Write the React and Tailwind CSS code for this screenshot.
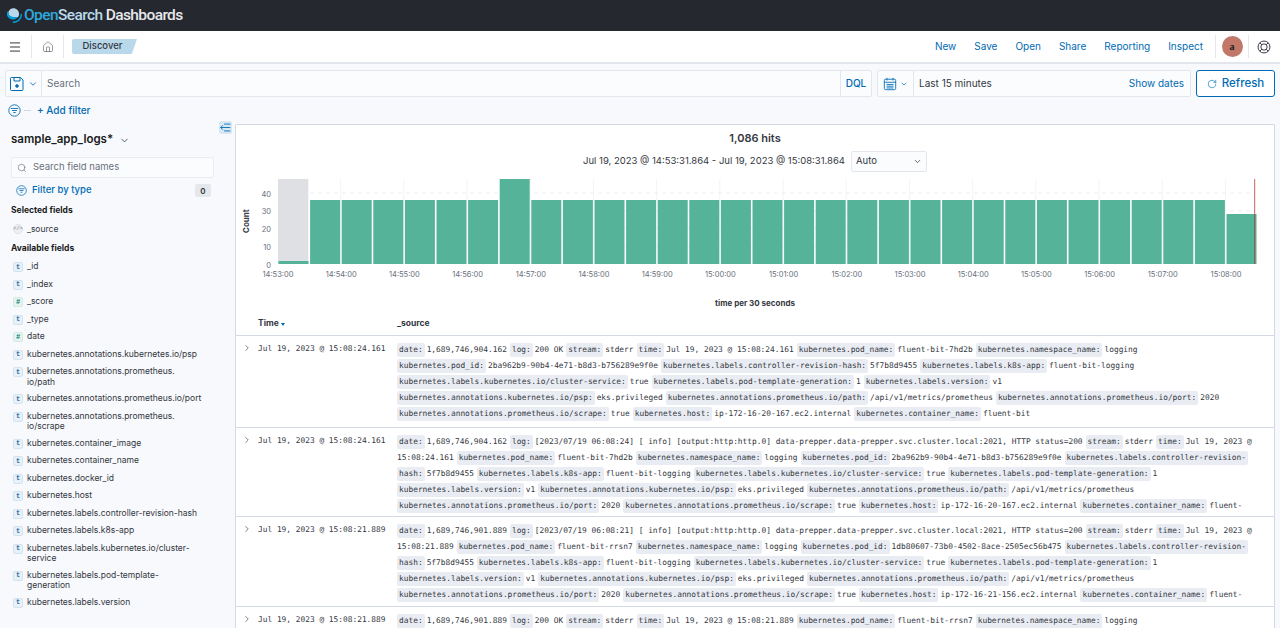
import { Menu, ChevronDown, ChevronRight, Search, RotateCw, Home } from 'lucide-react';

const SANS = 'font-["Inter",sans-serif]';

const bars = [2, 36, 36, 36, 36, 36, 36, 48, 36, 36, 36, 36, 36, 36, 36, 36, 36, 36, 36, 36, 36, 36, 36, 36, 36, 36, 36, 36, 36, 36, 28];
const ticks = ['14:53:00', '14:54:00', '14:55:00', '14:56:00', '14:57:00', '14:58:00', '14:59:00', '15:00:00', '15:01:00', '15:02:00', '15:03:00', '15:04:00', '15:05:00', '15:06:00', '15:07:00', '15:08:00'];

const fields = [
  ['t', '_id'],
  ['t', '_index'],
  ['#', '_score'],
  ['t', '_type'],
  ['#', 'date'],
  ['t', 'kubernetes.annotations.kubernetes.io/psp'],
  ['t', 'kubernetes.annotations.prometheus.\nio/path'],
  ['t', 'kubernetes.annotations.prometheus.io/port'],
  ['t', 'kubernetes.annotations.prometheus.\nio/scrape'],
  ['t', 'kubernetes.container_image'],
  ['t', 'kubernetes.container_name'],
  ['t', 'kubernetes.docker_id'],
  ['t', 'kubernetes.host'],
  ['t', 'kubernetes.labels.controller-revision-hash'],
  ['t', 'kubernetes.labels.k8s-app'],
  ['t', 'kubernetes.labels.kubernetes.io/cluster-\nservice'],
  ['t', 'kubernetes.labels.pod-template-\ngeneration'],
  ['t', 'kubernetes.labels.version'],
];

const rows = [
  {
    time: 'Jul 19, 2023 @ 15:08:24.161',
    height: 'h-[92px]',
    lines: [
      [['date:', '1,689,746,904.162'], ['log:', '200 OK'], ['stream:', 'stderr'], ['time:', 'Jul 19, 2023 @ 15:08:24.161'], ['kubernetes.pod_name:', 'fluent-bit-7hd2b'], ['kubernetes.namespace_name:', 'logging']],
      [['kubernetes.pod_id:', '2ba962b9-90b4-4e71-b8d3-b756289e9f0e'], ['kubernetes.labels.controller-revision-hash:', '5f7b8d9455'], ['kubernetes.labels.k8s-app:', 'fluent-bit-logging']],
      [['kubernetes.labels.kubernetes.io/cluster-service:', 'true'], ['kubernetes.labels.pod-template-generation:', '1'], ['kubernetes.labels.version:', 'v1']],
      [['kubernetes.annotations.kubernetes.io/psp:', 'eks.privileged'], ['kubernetes.annotations.prometheus.io/path:', '/api/v1/metrics/prometheus'], ['kubernetes.annotations.prometheus.io/port:', '2020']],
      [['kubernetes.annotations.prometheus.io/scrape:', 'true'], ['kubernetes.host:', 'ip-172-16-20-167.ec2.internal'], ['kubernetes.container_name:', 'fluent-bit']],
    ],
  },
  {
    time: 'Jul 19, 2023 @ 15:08:24.161',
    height: 'h-[89px]',
    lines: [
      [['date:', '1,689,746,904.162'], ['log:', '[2023/07/19 06:08:24] [ info] [output:http:http.0] data-prepper.data-prepper.svc.cluster.local:2021, HTTP status=200'], ['stream:', 'stderr'], ['time:', 'Jul 19, 2023 @']],
      [['', '15:08:24.161'], ['kubernetes.pod_name:', 'fluent-bit-7hd2b'], ['kubernetes.namespace_name:', 'logging'], ['kubernetes.pod_id:', '2ba962b9-90b4-4e71-b8d3-b756289e9f0e'], ['kubernetes.labels.controller-revision-', '']],
      [['hash:', '5f7b8d9455'], ['kubernetes.labels.k8s-app:', 'fluent-bit-logging'], ['kubernetes.labels.kubernetes.io/cluster-service:', 'true'], ['kubernetes.labels.pod-template-generation:', '1']],
      [['kubernetes.labels.version:', 'v1'], ['kubernetes.annotations.kubernetes.io/psp:', 'eks.privileged'], ['kubernetes.annotations.prometheus.io/path:', '/api/v1/metrics/prometheus']],
      [['kubernetes.annotations.prometheus.io/port:', '2020'], ['kubernetes.annotations.prometheus.io/scrape:', 'true'], ['kubernetes.host:', 'ip-172-16-20-167.ec2.internal'], ['kubernetes.container_name:', 'fluent-']],
    ],
  },
  {
    time: 'Jul 19, 2023 @ 15:08:21.889',
    height: 'h-[90px]',
    lines: [
      [['date:', '1,689,746,901.889'], ['log:', '[2023/07/19 06:08:21] [ info] [output:http:http.0] data-prepper.data-prepper.svc.cluster.local:2021, HTTP status=200'], ['stream:', 'stderr'], ['time:', 'Jul 19, 2023 @']],
      [['', '15:08:21.889'], ['kubernetes.pod_name:', 'fluent-bit-rrsn7'], ['kubernetes.namespace_name:', 'logging'], ['kubernetes.pod_id:', '1db80607-73b0-4502-8ace-2505ec56b475'], ['kubernetes.labels.controller-revision-', '']],
      [['hash:', '5f7b8d9455'], ['kubernetes.labels.k8s-app:', 'fluent-bit-logging'], ['kubernetes.labels.kubernetes.io/cluster-service:', 'true'], ['kubernetes.labels.pod-template-generation:', '1']],
      [['kubernetes.labels.version:', 'v1'], ['kubernetes.annotations.kubernetes.io/psp:', 'eks.privileged'], ['kubernetes.annotations.prometheus.io/path:', '/api/v1/metrics/prometheus']],
      [['kubernetes.annotations.prometheus.io/port:', '2020'], ['kubernetes.annotations.prometheus.io/scrape:', 'true'], ['kubernetes.host:', 'ip-172-16-21-156.ec2.internal'], ['kubernetes.container_name:', 'fluent-']],
    ],
  },
  {
    time: 'Jul 19, 2023 @ 15:08:21.889',
    height: 'h-[30px]',
    lines: [
      [['date:', '1,689,746,901.889'], ['log:', '200 OK'], ['stream:', 'stderr'], ['time:', 'Jul 19, 2023 @ 15:08:21.889'], ['kubernetes.pod_name:', 'fluent-bit-rrsn7'], ['kubernetes.namespace_name:', 'logging']],
    ],
  },
];

const Logo = () => (
  <svg width="15" height="15" viewBox="0 0 64 64" className="mr-[2px]">
    <path d="M61 24c-1.7 0-3 1.3-3 3 0 17.700-14.300 31-31 31-1.700 0-3 1.300-3 3s1.300 3 3 3c20 0 37-16 37-37 0-1.700-1.300-3-3-3z" fill="#00a3e0" />
    <path d="M48 38c2-3.500 4-8 3.500-14.500C50.500 10 38.500 0 26 1 13.800 2 5 12.500 6 22.500c.5 7 5 14 14 16 9 2 20.500 3 28-.5z" fill="#b9d9eb" />
    <path d="M3 14c-2 3.500-4 8.500-3 15 1.500 9.500 10 19 23 20 10 .7 19-4 24-11-6 3-16 2-24-.5C10 34 5 25 3 14z" fill="#00a3e0" />
  </svg>
);

const SaveIcon = () => (
  <svg width="16" height="16" viewBox="0 0 16 16" fill="none" stroke="#006bb4" strokeWidth="1">
    <path d="M2.500 1.500h9l2.500 2.500v9.500a1 1 0 0 1-1 1h-10.500a1 1 0 0 1-1-1v-11a1 1 0 0 1 1-1z" />
    <path d="M5 1.500v3.500h6v-3.500" />
    <circle cx="8" cy="10" r="1.300" fill="#006bb4" />
  </svg>
);

const FilterCircle = ({ size = 13 }) => (
  <svg width={size} height={size} viewBox="0 0 16 16" fill="none" stroke="#006bb4" strokeWidth="1.100">
    <circle cx="8" cy="8" r="7" />
    <path d="M3.500 5.500h9M5 8h6M6.500 10.500h3" />
  </svg>
);

const CalendarIcon = () => (
  <svg width="14" height="14" viewBox="0 0 16 16" fill="none" stroke="#006bb4" strokeWidth="1">
    <rect x="1.500" y="2.500" width="13" height="12" rx="1.500" />
    <path d="M1.500 6h13M4.500 1v3M11.500 1v3M4 8.500h8M4 10.500h8M4 12.500h8" />
  </svg>
);

const CollapseIcon = () => (
  <svg width="11" height="11" viewBox="0 0 16 16" fill="none" stroke="#006bb4" strokeWidth="1.300">
    <path d="M6 3h9M1 8h14M6 13h9M4 5 1 8l3 3" />
  </svg>
);

const GlobeIcon = () => (
  <svg width="14" height="14" viewBox="0 0 16 16" fill="none" stroke="#343741" strokeWidth="1.100">
    <circle cx="8" cy="8" r="6.800" />
    <circle cx="8" cy="8" r="3.600" />
    <path d="M3.200 3.200 5.500 5.500M12.800 3.200 10.500 5.500M3.200 12.800 5.500 10.500M12.800 12.800 10.500 10.500" />
  </svg>
);

const TypeToken = ({ type }) => (
  <span
    className={`flex h-[10px] w-[10px] shrink-0 items-center justify-center rounded-[2px] border font-["Liberation_Mono",monospace] text-[7px] font-bold leading-none ${
      type === '#' ? 'border-[#d3ebe3] bg-[#e6f4ef] text-[#017d73]' : 'border-[#d3e3f1] bg-[#e6f1fa] text-[#3a6f9f]'
    }`}
  >
    {type}
  </span>
);

const Chart = () => {
  const left = 277;
  const pitch = 31.6;
  const y0 = 274;
  const scale = 1.77;
  const gridY = [203, 221, 238, 256];
  return (
    <svg viewBox="0 0 1040 130" width="1040" height="130" className="block">
      <g transform="translate(-235 -182)">
        {ticks.map((_, i) => (
          <line key={i} x1={339.600 + i * 63.200} x2={339.600 + i * 63.200} y1="189" y2="274" stroke="#f3f4f6" />
        ))}
        {gridY.map((y) => (
          <line key={y} x1="277" x2="1254" y1={y} y2={y} stroke="#eceef1" strokeDasharray="4 4" />
        ))}
        <rect x="277" y="189" width="30.300" height="85" fill="#dfe0e4" />
        {bars.map((v, i) => {
          const h = i === 0 ? 3 : i === 7 ? 85 : v === 36 ? 64 : 50;
          return <rect key={i} x={left + i * pitch + 0.500} y={y0 - h} width={pitch - 1.600} height={h} fill="#54b399" />;
        })}
        <rect x="1253" y="189" width="1.200" height="85" fill="#bd271e" opacity="0.6" />
        {[40, 30, 20, 10, 0].map((v, i) => (
          <text key={v} x="270" y={[206.500, 224, 242, 260, 277.500][i]} textAnchor="end" fontSize="7.500" fill="#69707d" fontFamily="Inter, sans-serif">
            {v}
          </text>
        ))}
        <text transform="translate(248 243) rotate(-90)" fontSize="8" fontWeight="700" fill="#343741" fontFamily="Inter, sans-serif">
          Count
        </text>
        {ticks.map((t, i) => (
          <text key={t} x={277 + i * 63.200} y="287" textAnchor="middle" fontSize="7.500" fill="#69707d" fontFamily="Inter, sans-serif">
            {t}
          </text>
        ))}
      </g>
    </svg>
  );
};

const SourceRow = ({ row }) => (
  <div className={`flex border-b border-[#d3dae6] ${row.height} overflow-hidden`}>
    <div className="flex w-[22px] shrink-0 justify-center pt-[7px]">
      <ChevronRight size={10} strokeWidth={1.500} color="#343741" />
    </div>
    <div className="w-[139px] shrink-0 whitespace-pre pt-[7px] text-[#343741]">{row.time}</div>
    <div className="min-w-0 flex-1 overflow-hidden pt-[6px]">
      <div className="h-[82px] overflow-hidden">
        {row.lines.map((line, i) => (
          <div key={i} className="flex h-[16px] items-center whitespace-pre">
            {line.map(([k, v], j) => (
              <span key={j} className="mr-[3px] flex items-center">
                {k && <span className="mr-[2px] rounded-[2px] bg-[#e9edf3] px-[2px] py-[1px] leading-[12px] text-[#343741]">{k}</span>}
                {v && <span className="text-[#343741]">{v}</span>}
              </span>
            ))}
          </div>
        ))}
      </div>
    </div>
  </div>
);

export default function App() {
  return (
    <div className={`flex h-[628px] w-[1280px] flex-col overflow-hidden bg-[#f7f9fc] ${SANS} text-[#343741]`}>
      <header className="flex h-[31px] shrink-0 items-center bg-[#25282f] pl-[7px]">
        <Logo />
        <span className='font-["Roboto",sans-serif] text-[15.500px] font-medium leading-none tracking-[-0.6px]'>
          <span className="text-[#2ea8dd]">Open</span>
          <span className="text-[#b9d9eb]">Search</span>
          <span className="text-[#e8e9eb]"> Dashboards</span>
        </span>
      </header>

      <nav className="flex h-[33px] shrink-0 items-center border-b-2 border-[#e3e6ec] bg-white">
        <div className="flex h-[23px] w-[32px] items-center justify-center border-r border-[#e4e7ec]">
          <Menu size={14} strokeWidth={1.500} color="#1a1c21" className="-ml-[1px]" />
        </div>
        <div className="flex h-[23px] w-[32px] items-center justify-center border-r border-[#e4e7ec]">
          <Home size={12} strokeWidth={1} color="#343741" />
        </div>
        <div className="ml-[8px] flex h-[15px] w-[65px] items-center justify-center rounded-l-[2px] bg-[#b9d9eb] pr-[4px] text-[9.500px] font-medium text-[#343741] [clip-path:polygon(0_0,100%_0,92%_100%,0_100%)]">
          Discover
        </div>
        <div className="ml-auto flex items-center gap-[18px] text-[10px] text-[#006bb4]">
          <span>New</span>
          <span>Save</span>
          <span>Open</span>
          <span>Share</span>
          <span>Reporting</span>
          <span>Inspect</span>
        </div>
        <div className="ml-[12px] flex h-[23px] w-[34px] items-center justify-center border-x border-[#e4e7ec]">
          <span className='flex h-[21px] w-[21px] items-center justify-center rounded-full bg-[#c17868] font-["Liberation_Serif",serif] text-[10px] font-bold text-[#1a1c21]'>a</span>
        </div>
        <div className="flex w-[31px] items-center justify-center pr-[1px]">
          <GlobeIcon />
        </div>
      </nav>

      <div className="flex h-[27px] shrink-0 items-stretch gap-[5px] pl-[5px] pr-[5px] mt-[6px]">
        <div className="flex flex-1 rounded-[2px] border border-[#e3e6ec] bg-[#fbfcfd] text-[10px]">
          <div className="flex w-[36px] items-center justify-center gap-[3px] border-r border-[#e3e6ec]">
            <SaveIcon />
            <ChevronDown size={10} color="#006bb4" />
          </div>
          <div className="flex flex-1 items-center pl-[5px] text-[#69707d]">Search</div>
          <div className="flex w-[31px] items-center justify-center border-l border-[#e3e6ec] font-medium text-[#006bb4]">DQL</div>
        </div>
        <div className="flex w-[314px] rounded-[2px] border border-[#e3e6ec] bg-[#fbfcfd] text-[10px]">
          <div className="flex w-[36px] items-center justify-center gap-[3px] border-r border-[#e3e6ec]">
            <CalendarIcon />
            <ChevronDown size={8} color="#006bb4" />
          </div>
          <div className="flex flex-1 items-center justify-between pl-[5px] pr-[6px]">
            <span>Last 15 minutes</span>
            <span className="text-[#006bb4]">Show dates</span>
          </div>
        </div>
        <div className="flex w-[79px] items-center justify-center gap-[5px] rounded-[3px] border border-[#006bb4] bg-white text-[11.500px] font-medium text-[#006bb4]">
          <RotateCw size={10} strokeWidth={1.500} />
          Refresh
        </div>
      </div>

      <div className="flex h-[27px] shrink-0 items-center pl-[8px] text-[10px] text-[#006bb4]">
        <FilterCircle />
        <span className="ml-[3px] h-px w-[7px] bg-[#d3dae6]" />
        <span className="ml-[6px] font-medium">+ Add filter</span>
      </div>

      <div className="relative flex min-h-0 flex-1">
        <aside className="w-[235px] shrink-0 overflow-hidden pl-[11px] pr-[22px]">
          <div className="mt-[6px] flex h-[20px] items-center gap-[6px] text-[11.500px] font-semibold text-[#1a1c21]">
            sample_app_logs*
            <ChevronDown size={11} strokeWidth={1.500} />
          </div>
          <div className="mt-[7px] flex h-[21px] w-[203px] items-center gap-[6px] rounded-[2px] border border-[#e9edf3] bg-[#fbfcfd] pl-[5px] text-[9.500px] text-[#69707d]">
            <Search size={10} strokeWidth={1.500} />
            Search field names
          </div>
          <div className="mt-[5px] flex h-[15px] w-[200px] items-center pl-[5px] text-[9.500px] font-medium text-[#006bb4]">
            <FilterCircle size={11} />
            <span className="ml-[5px]">Filter by type</span>
            <span className="ml-auto flex h-[13px] w-[16px] items-center justify-center rounded-[2px] bg-[#e4e7ec] text-[8px] font-semibold text-[#343741]">0</span>
          </div>
          <div className="mt-[6px] flex h-[13px] items-center text-[8.500px] font-bold text-[#1a1c21]">Selected fields</div>
          <div className="mt-[6px] flex h-[12px] items-center pl-[2px] text-[8.500px] text-[#343741]">
            <span className='flex h-[10px] w-[10px] shrink-0 items-center justify-center rounded-full border border-[#dcdfe4] bg-[#eef0f3] font-["Liberation_Mono",monospace] text-[5px] leading-none text-[#69707d]'>&lt;/&gt;</span>
            <span className="ml-[4px]">_source</span>
          </div>
          <div className="mt-[7px] flex h-[13px] items-center text-[8.500px] font-bold text-[#1a1c21]">Available fields</div>
          <div className="mt-[3px] flex flex-col">
            {fields.map(([t, name]) => (
              <div key={name} className="flex items-start py-[3.250px] pl-[2px] text-[8.500px] leading-[10.250px]">
                <span className="mt-[1px]">
                  <TypeToken type={t} />
                </span>
                <span className="ml-[4px] whitespace-pre-line">{name}</span>
              </div>
            ))}
          </div>
        </aside>

        <div className="absolute left-[219px] top-[-3px] flex h-[13px] w-[13px] items-center justify-center rounded-[2px] bg-[#d8e7f4]">
          <CollapseIcon />
        </div>

        <main className="mr-[5px] mt-[0px] flex-1 overflow-hidden rounded-t-[2px] border border-b-0 border-[#d3dae6] bg-white">
          <div className="flex h-[47px] flex-col items-center pt-[7px]">
            <div className="text-[11px] font-semibold leading-[13px] text-[#343741]">1,086 hits</div>
          </div>
          <div className="-mt-[21px] flex h-[21px] items-center justify-center pl-[0px] text-[9.500px]">
            <span>Jul 19, 2023 @ 14:53:31.864 - Jul 19, 2023 @ 15:08:31.864</span>
            <span className="ml-[6px] flex h-[21px] w-[76px] items-center justify-between rounded-[2px] border border-[#e3e6ec] bg-[#fbfcfd] px-[4px]">
              Auto
              <ChevronDown size={9} />
            </span>
          </div>
          <Chart />
          <div className="-mt-[5px] flex h-[12px] items-center justify-center pl-[0px] text-[8px] font-bold text-[#343741]">time per 30 seconds</div>
          <div className='font-["DejaVu_Sans_Mono",monospace] text-[7.850px]'>
            <div className={`flex h-[25px] items-center border-b border-[#d3dae6] ${SANS} mt-[2px] text-[8.500px] font-bold`}>
              <span className="ml-[22px] flex w-[139px] items-center gap-[2px]">
                Time
                <span className="mt-[2px] h-0 w-0 border-x-[2.500px] border-t-[3px] border-x-transparent border-t-[#006bb4]" />
              </span>
              <span>_source</span>
            </div>
            {rows.map((row, i) => (
              <SourceRow key={i} row={row} />
            ))}
          </div>
        </main>
      </div>
    </div>
  );
}
